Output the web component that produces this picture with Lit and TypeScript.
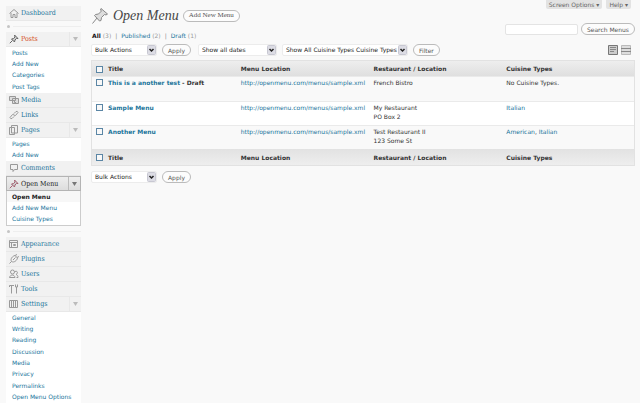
import { LitElement, html, css, svg, nothing } from "lit";
import { customElement, property } from "lit/decorators.js";

const icons: Record<string, unknown> = {
  home: svg`<path d="M.5 5.500 5 1.500 9.500 5.500M2 5v4.500h2V6.500h2v3h2V5"/>`,
  pin: svg`<path fill="#ccc" d="M5.500 1 9 4.500 7.500 4.500 6 6 5.500 8 2.500 5 4.500 4.500 6 3z"/><path d="M3.500 6.500 .8 9.200"/>`,
  media: svg`<path fill="#ddd" d="M.5 1.500h6v4h-6zM3.500 3.500h6v5h-6zM5.500 5.500v2h1.500"/>`,
  link: svg`<path d="M5 3.500 7 1.500Q8.500.8 9 2.500L6.500 5.500Q5.500 6 4.500 5M5 6.500 3 8.500Q1.500 9.200 1 7.500L3.500 4.500Q4.500 4 5.500 5"/>`,
  pages: svg`<path fill="#eee" d="M.5 2.500h5v7h-5zM2.500.5h6v7.500h-6z"/>`,
  comment: svg`<path d="M1.500 1.500h7v5h-3l-1.500 2v-2h-2.500z"/>`,
  appearance: svg`<path d="M.5 1.500h8v7h-8zM.5 3.500h8M2.500 3.500v5M4.500 5.500h2v1h-2z"/>`,
  plugin: svg`<path d="M.5 9.500 2.500 7.500C1 5 3.500 2 6 1.500L8.500 4C8 6.500 5 9 2.500 7.500M6 1.500 8 .5M8.500 4 9.500 2M4 6 6.500 3.500"/>`,
  users: svg`<circle cx="3.500" cy="3" r="2"/><path d="M.5 8.500C1 5.500 5.500 5 6 8.500zM6 2.500c3-1 3 2 1 3 1.500.3 2 1.500 2 3H7.500"/>`,
  tools: svg`<path d="M.5 1.500h4.500M2.500 1.500v8M.5 1.500v1.500M6.500 .5v2.500h2V.5M7.500 3v6.500"/>`,
  settings: svg`<path d="M.5 1.500h8v7h-8zM2.500 2v6M4.500 2v6M6.500 2v6M2 3.500h1M4 6.500h1M6 4.500h1"/>`,
};

const icon = (name: string) =>
  html`<svg class="icon" viewBox="0 0 10 10" aria-hidden="true">${icons[name]}</svg>`;

interface Item {
  label: string;
  icon: string;
  state?: string;
  sub?: string[];
}

const groups: Item[][] = [
  [{ label: "Dashboard", icon: "home" }],
  [
    { label: "Posts", icon: "pin", state: "hot", sub: ["Posts", "Add New", "Categories", "Post Tags"] },
    { label: "Media", icon: "media" },
    { label: "Links", icon: "link" },
    { label: "Pages", icon: "pages", sub: ["Pages", "Add New"] },
    { label: "Comments", icon: "comment" },
    { label: "Open Menu", icon: "pin", state: "current", sub: ["Open Menu", "Add New Menu", "Cuisine Types"] },
  ],
  [
    { label: "Appearance", icon: "appearance" },
    { label: "Plugins", icon: "plugin" },
    { label: "Users", icon: "users" },
    { label: "Tools", icon: "tools" },
    {
      label: "Settings",
      icon: "settings",
      sub: ["General", "Writing", "Reading", "Discussion", "Media", "Privacy", "Permalinks", "Open Menu Options"],
    },
  ],
];

@customElement("admin-nav")
class AdminNav extends LitElement {
  static styles = css`
    :host { display: block; padding: 6px 0 0 6px; font: 6px/11px "DejaVu Sans", sans-serif; }
    ul { list-style: none; margin: 0; padding: 0; }
    a { color: #21759b; text-decoration: none; }
    .head {
      display: flex; align-items: center; box-sizing: border-box; height: 15px; padding-left: 3px;
      background: #f1f1f1; border-bottom: 1px solid #e8e8e8;
      font: 7px/14px "DejaVu Serif Condensed", "Liberation Serif", serif;
    }
    .head a { flex: 1; display: flex; align-items: center; gap: 2px; }
    .icon { width: 10px; height: 10px; fill: none; stroke: #999; stroke-width: 1; }
    .toggle { width: 12px; height: 14px; padding: 0; border: 0; border-left: 1px solid #e8e8e8; background: none; display: grid; place-items: center; }
    .toggle svg { width: 5px; height: 4px; fill: #bbb; }
    .sub { padding: 0 0 1px 6px; background: #fff; }
    .sub li { height: 11px; white-space: nowrap; }
    .sub li:nth-child(3n) { height: 12px; }
    .hot .head a { color: #d54e21; }
    .hot .icon { stroke: #666; }
    .current .head { background: linear-gradient(#eee, #ddd); border: 1px solid #b4b4b4; padding-left: 2px; }
    .current .head a { color: #222; }
    .current .icon { stroke: #a46070; }
    .current .toggle { border-color: #bbb; height: 13px; }
    .current .toggle svg { fill: #777; }
    .current .sub { border: 1px solid #ccc; border-top: 0; padding: 0; }
    .current .sub li { padding-left: 5px; }
    .current .sub li:first-child { background: #f7f7f7; }
    .current .sub li:first-child a { color: #222; font-weight: bold; }
    .sep { display: flex; align-items: center; height: 11px; }
    .sep::before { content: ""; width: 3px; height: 3px; margin-left: 1px; border-radius: 2px; background: #c4c4c4; }
    .sep::after { content: ""; flex: 1; margin-left: 3px; border-top: 1px solid #eee; }
  `;
  render() {
    return html`<nav>
      ${groups.map(
        (g, i) => html`${i ? html`<div class="sep"></div>` : nothing}
          <ul>
            ${g.map(
              (it) => html`<li class=${it.state ?? ""}>
                <div class="head">
                  <a href="#">${icon(it.icon)}<span>${it.label}</span></a>
                  ${it.sub
                    ? html`<button class="toggle" aria-label="Toggle ${it.label}"><svg viewBox="0 0 5 4"><path d="M0 0h5L2.500 4z" /></svg></button>`
                    : nothing}
                </div>
                ${it.sub ? html`<ul class="sub">${it.sub.map((s) => html`<li><a href="#">${s}</a></li>`)}</ul>` : nothing}
              </li>`,
            )}
          </ul>`,
      )}
    </nav>`;
  }
}

@customElement("pick-list")
class PickList extends LitElement {
  @property() label = "";
  static styles = css`
    :host { display: block; position: relative; height: 12px; }
    select {
      appearance: none; display: block; width: 100%; height: 12px; box-sizing: border-box; margin: 0; padding: 0 8px 0 3px;
      border: 1px solid #ececec; border-radius: 2px; background: #fff; color: #222; font: 6px/10px "DejaVu Sans", sans-serif;
    }
    svg { position: absolute; right: 1px; top: 1px; width: 9px; height: 10px; pointer-events: none; }
  `;
  render() {
    return html`<select aria-label=${this.label}><option>${this.label}</option></select>
      <svg viewBox="0 0 9 10"><rect x=".5" y=".5" width="8" height="9" rx="1" fill="#dcdce4" stroke="#c8c8d2" /><path d="M2.500 4 4.500 6 6.500 4" fill="none" stroke="#222" stroke-width="1.500" /></svg>`;
  }
}

const url = "http://openmenu.com/menus/sample.xml";
const rows = [
  { title: "This is a another test", draft: true, place: ["French Bistro"], types: [] as string[] },
  { title: "Sample Menu", draft: false, place: ["My Restaurant", "PO Box 2"], types: ["Italian"] },
  { title: "Another Menu", draft: false, place: ["Test Restaurant II", "123 Some St"], types: ["American", "Italian"] },
];

@customElement("app-root")
class AppRoot extends LitElement {
  static styles = css`
    :host {
      display: grid; grid-template-columns: 81px minmax(0, 1fr); column-gap: 10px; min-height: 100vh;
      background: #f9f9f9; color: #333; font: 6px/9px "DejaVu Sans", sans-serif; overflow: hidden;
    }
    main { padding-right: 5px; display: flex; flex-direction: column; }
    a { color: #21759b; text-decoration: none; }
    button { font: inherit; color: #555; box-sizing: border-box; height: 12px; padding: 0 5px; border: 1px solid #bbb; border-radius: 6px; background: #fcfcfc; white-space: nowrap; }
    .meta { display: flex; justify-content: flex-end; gap: 4px; padding-right: 4px; height: 9px; }
    .meta button { height: 9px; border: 0; border-radius: 0 0 2px 2px; background: #e3e3e3; padding: 0 3px; color: #666; }
    .title { display: flex; align-items: center; height: 13px; gap: 4px; }
    .title svg { width: 18px; height: 18px; }
    h1 { margin: 0; font: italic 14px/16px "Liberation Serif", serif; color: #464646; }
    .title button { font-family: "Liberation Serif", serif; font-size: 7px; }
    .top { display: flex; justify-content: space-between; height: 18px; margin-bottom: 4px; }
    .search { display: flex; align-items: center; align-self: flex-start; gap: 3px; padding-top: 1px; }
    .search input { width: 73px; height: 11px; box-sizing: border-box; border: 1px solid #e4e4e4; border-radius: 2px; background: #fff; font: inherit; padding: 0 2px; }
    .views { display: flex; align-self: flex-end; gap: 2px; padding-left: 1px; color: #999; }
    .views b { color: #111; }
    .views .bar { color: #888; margin: 0 2px; }
    .bar-row { display: flex; align-items: center; gap: 5px; height: 12px; }
    .bulk { width: 66px; }
    .dates { width: 79px; margin-left: 2px; }
    .kinds { width: 126px; }
    .modes { margin-left: auto; display: flex; gap: 3px; padding-right: 4px; }
    .modes svg { display: block; width: 10px; height: 10px; }
    table { width: 100%; margin: 4px 0 5px; border: 1px solid #e2e2e2; border-collapse: separate; border-spacing: 0; table-layout: fixed; background: #fff; }
    th { width: 24.5%; height: 15px; padding: 0; text-align: left; background: linear-gradient(#e2e2e2, #eee); color: #333; }
    thead th { background: linear-gradient(#eee, #dfdfdf); }
    th:last-child { width: auto; }
    th.tick { width: 16px; }
    td { height: 24px; box-sizing: border-box; padding: 1px 0; border-top: 1px solid #eaeaea; vertical-align: top; white-space: nowrap; }
    tbody tr:first-child td { height: 25px; }
    tbody tr:nth-child(odd) td { background: #f9f9f9; }
    tfoot th { height: 16px; }
    input[type="checkbox"] { appearance: none; display: block; width: 7px; height: 7px; box-sizing: border-box; margin: 1px 0 0 4px; border: 1px solid #5b86a5; background: #f8f8f8; }
    .name { font-weight: bold; }
  `;
  private heads() {
    return html`<tr>
      <th class="tick"><input type="checkbox" aria-label="Select all" /></th>
      <th>Title</th><th>Menu Location</th><th>Restaurant / Location</th><th>Cuisine Types</th>
    </tr>`;
  }
  render() {
    return html`<admin-nav></admin-nav>
      <main>
        <div class="meta"><button>Screen Options ▾</button><button>Help ▾</button></div>
        <div class="title">
          <svg viewBox="0 0 18 18" fill="#ddd" stroke="#888"><path d="M10 1.500 16.500 7 15 8 13.500 7.500 10.500 10.500 10 13.500 8.500 14 3.500 8.500 4.500 7.500 7.500 7 10.500 4 9.500 3zM6 11 1.500 16.500" /></svg>
          <h1>Open Menu</h1><button>Add New Menu</button>
        </div>
        <div class="top">
          <div class="views"><b>All</b><span>(3)</span><span class="bar">|</span><a href="#">Published</a><span>(2)</span><span class="bar">|</span><a href="#">Draft</a><span>(1)</span></div>
          <div class="search"><input aria-label="Search Menus" /><button>Search Menus</button></div>
        </div>
        <div class="bar-row">
          <pick-list class="bulk" label="Bulk Actions"></pick-list><button>Apply</button>
          <pick-list class="dates" label="Show all dates"></pick-list>
          <pick-list class="kinds" label="Show All Cuisine Types Cuisine Types"></pick-list><button>Filter</button>
          <div class="modes">
            <svg viewBox="0 0 10 10"><path d="M.5.5h9v9h-9z" fill="#ccc" stroke="#777" /><path d="M2 2.500h6M2 4.500h6M2 6.500h4" stroke="#888" /></svg>
            <svg viewBox="0 0 10 10"><path d="M.5.5h9v9h-9z" fill="#ddd" stroke="#bbb" /><path d="M0 3.500h10M0 6.500h10" stroke="#888" /></svg>
          </div>
        </div>
        <table>
          <thead>${this.heads()}</thead>
          <tbody>
            ${rows.map(
              (r) => html`<tr>
                <td><input type="checkbox" aria-label=${r.title} /></td>
                <td class="name"><a href="#">${r.title}</a>${r.draft ? " - Draft" : nothing}</td>
                <td><a href="#">${url}</a></td>
                <td>${r.place.map((p) => html`<div>${p}</div>`)}</td>
                <td>${r.types.length ? r.types.map((t, i) => html`${i ? ", " : nothing}<a href="#">${t}</a>`) : "No Cuisine Types."}</td>
              </tr>`,
            )}
          </tbody>
          <tfoot>${this.heads()}</tfoot>
        </table>
        <div class="bar-row"><pick-list class="bulk" label="Bulk Actions"></pick-list><button>Apply</button></div>
      </main>`;
  }
}
